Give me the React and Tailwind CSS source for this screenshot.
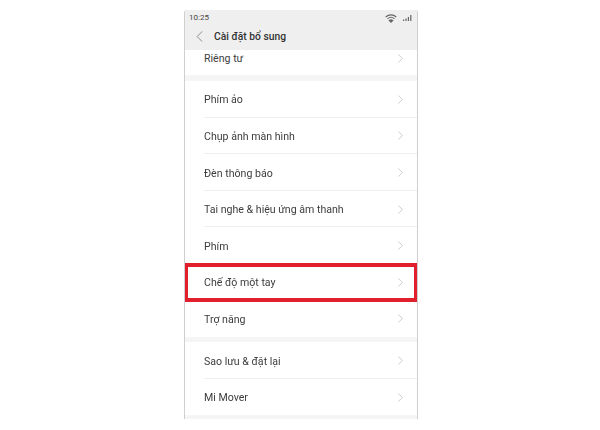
import { ChevronLeft, ChevronRight } from "lucide-react"

function Row({ label, divider, highlight, className }) {
  return (
    <div className={`relative flex h-[36.6px] items-center pl-[19px] pr-[9px] ${className || ""}`}>
      <span className="flex-1 pt-[2px] text-[10.6px] text-[#3c3c3c]">{label}</span>
      <ChevronRight size={15} strokeWidth={0.9} className="text-[#a6a6a6]" />
      {divider && <div className="absolute bottom-0 left-[19px] right-0 h-px bg-[#eee]" />}
      {highlight && <div className="absolute -inset-x-px -top-px -bottom-px border-4 border-[#e21f2d]" />}
    </div>
  )
}

function Section({ items }) {
  return (
    <div className="bg-white">
      {items.map((it, i) => (
        <Row key={it.label} {...it} divider={i < items.length - 1 && !it.noDivider} />
      ))}
    </div>
  )
}

export default function App() {
  return (
    <div className="h-[430px] w-[600px] bg-white pt-[10px] font-['Roboto','Noto_Sans',sans-serif]">
      <div className="ml-[184px] h-[409px] w-[234px] overflow-hidden rounded-t-[3px] border-x border-[#cfcfcf] bg-[#f5f5f5] blur-[0.3px]">
        <div className="h-[40px] bg-[#efefef]">
          <div className="flex h-[13px] items-center justify-between pl-[4px] pr-[5px] pt-[3px]">
            <span className="text-[8px] text-[#444]">10:25</span>
            <div className="flex items-center gap-[6px]">
              <svg width="12" height="9" viewBox="0 0 12 9" fill="none" stroke="#666" strokeWidth="1.1">
                <path d="M0.7 3C3.8 0.2 8.2 0.2 11.3 3" />
                <path d="M2.5 4.8C4.6 3 7.4 3 9.5 4.8" />
                <path d="M4.3 6.5C5.3 5.7 6.7 5.7 7.7 6.5L6 8.2Z" fill="#666" />
              </svg>
              <svg width="9" height="6" viewBox="0 0 9 6" className="text-[#666]">
                <rect x="0" y="4.5" width="1.2" height="1.5" fill="currentColor" />
                <rect x="2.4" y="3.5" width="1.2" height="2.5" fill="currentColor" />
                <rect x="4.8" y="2" width="1.2" height="4" fill="currentColor" />
                <rect x="7.2" y="0" width="1.2" height="6" fill="currentColor" />
              </svg>
            </div>
          </div>
          <div className="flex h-[27px] items-center pl-[5px]">
            <ChevronLeft size={19} strokeWidth={0.9} className="text-[#666]" />
            <span className="ml-[5px] text-[10.3px] font-medium text-[#333]">Cài đặt bổ sung</span>
          </div>
        </div>
        <div className="flex h-[25px] items-center bg-white pb-[9px] pl-[19px] pr-[9px]">
          <span className="flex-1 pt-[2px] text-[10.6px] text-[#3c3c3c]">Riêng tư</span>
          <ChevronRight size={15} strokeWidth={0.9} className="text-[#a6a6a6]" />
        </div>
        <div className="mt-[6px] flex flex-col">
          <Section
            items={[
              { label: "Phím ảo" },
              { label: "Chụp ảnh màn hình" },
              { label: "Đèn thông báo" },
              { label: "Tai nghe & hiệu ứng âm thanh" },
              { label: "Phím", noDivider: true },
              { label: "Chế độ một tay", highlight: true, noDivider: true, className: "z-10" },
              { label: "Trợ năng" },
            ]}
          />
          <div className="mt-[5px]">
            <Section items={[{ label: "Sao lưu & đặt lại" }, { label: "Mi Mover" }]} />
          </div>
        </div>
      </div>
    </div>
  )
}
